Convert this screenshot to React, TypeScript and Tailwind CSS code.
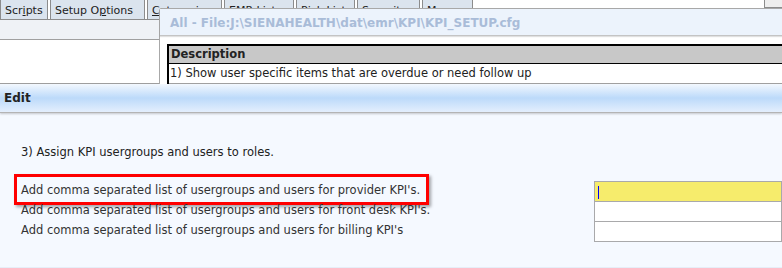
const tabs = [
  { label: "Scripts", w: "w-[48px]", u: 3 },
  { label: "Setup Options", w: "w-[95px]", u: 7 },
  { label: "Categories", w: "w-[75px]", u: 0 },
  { label: "EMR Lists", w: "w-[70px]", u: 0 },
  { label: "Pick Lists", w: "w-[59px]", u: 0 },
  { label: "Security", w: "w-[63px]", u: 0 },
  { label: "Macros", w: "w-[51px]", u: 0 },
];

const rows = [
  "Add comma separated list of usergroups and users for provider KPI's.",
  "Add comma separated list of usergroups and users for front desk KPI's.",
  "Add comma separated list of usergroups and users for billing KPI's",
];

function Tab({ label, w, u }: { label: string; w: string; u: number }) {
  return (
    <div
      className={`${w} h-[20px] shrink-0 border border-t-0 border-[#8c8c8c] bg-[#dbe4ee] mr-[2px] flex items-center pt-[3px] pl-[4px] text-[#222]`}
    >
      {label.slice(0, u)}
      <span className="underline">{label.charAt(u)}</span>
      {label.slice(u + 1)}
    </div>
  );
}

export default function App() {
  return (
    <div
      className="relative w-[782px] h-[268px] overflow-hidden bg-[#f5f9ff] text-[11.5px] text-[#222]"
      style={{ fontFamily: '"DejaVu Sans", Verdana, sans-serif' }}
    >
      {/* top window behind the dialog */}
      <div className="flex h-[20px] bg-white border-b border-[#8c8c8c] text-[11px]">
        {tabs.map((t) => (
          <Tab key={t.label} {...t} />
        ))}
        <div className="flex-1" />
        <div className="w-[18px] h-[8px] border-l border-b border-[#8c8c8c] bg-[#eeeeee]" />
      </div>
      <div className="h-[20px] bg-[#eff2f6] border-b border-[#a0a0a0]" />
      <div className="h-[44px] bg-white border-b border-[#a0a0a0]" />

      {/* dialog overlay */}
      <div className="absolute left-[159px] top-[8px] w-[640px] h-[76px] bg-white border-l border-t border-[#a8a8a8] rounded-tl-[3px]">
        <div className="h-[27px] bg-[#ecf3fc] border-b border-[#c4c4c4] shadow-[0_1px_1px_rgba(0,0,0,0.12)] flex items-center pt-[2px] pl-[10px] font-bold text-[12px] text-[#a9bcd8]">
          All - File:J:\SIENAHEALTH\dat\emr\KPI\KPI_SETUP.cfg
        </div>
        <div className="ml-[7px] mt-[8px] border-l-2 border-t-2 border-black">
          <div className="h-[18px] bg-[#c8c8c8] border-b border-black flex items-center pl-[2px] font-bold text-[11.5px] text-[#222]">
            Description
          </div>
          <div className="h-[20px] bg-white border-b border-[#a0a0a0] flex items-center pl-[1px]">
            1) Show user specific items that are overdue or need follow up
          </div>
        </div>
      </div>

      {/* edit bar */}
      <div className="h-[29px] bg-gradient-to-b from-[#f3f8fe] via-[#bcdafa] to-[#e4effd] border-b border-[#b4b4b4] shadow-[0_1px_2px_rgba(0,0,0,0.2)] flex items-center pl-[4px] font-bold text-[12px] text-[#222]">
        Edit
      </div>

      {/* body */}
      <div className="pl-[21px] pt-[32px]">
        <div className="h-[14px] leading-[14px]">3) Assign KPI usergroups and users to roles.</div>
        <div className="mt-[22px]">
          {rows.map((r, i) => (
            <div key={r} className="relative flex h-[20px] items-center">
              {i === 0 && (
                <div className="absolute left-[-7px] top-[-7px] w-[415px] h-[31px] border-[3px] border-[#ff0000] shadow-[2px_2px_3px_rgba(0,0,0,0.35)]" />
              )}
              <div className="w-[573px] shrink-0 text-[#333]">{r}</div>
              <div
                className={`relative self-start w-[200px] h-[21px] border border-[#a9a9ab] ${
                  i === 0 ? "bg-[#f6ec6c]" : "bg-white"
                }`}
              >
                {i === 0 && <div className="absolute left-[3px] top-[4px] w-px h-[13px] bg-[#0000ff]" />}
              </div>
            </div>
          ))}
        </div>
      </div>
      <div className="absolute left-0 bottom-0 w-full h-px bg-[#e6eef8]" />
    </div>
  );
}
